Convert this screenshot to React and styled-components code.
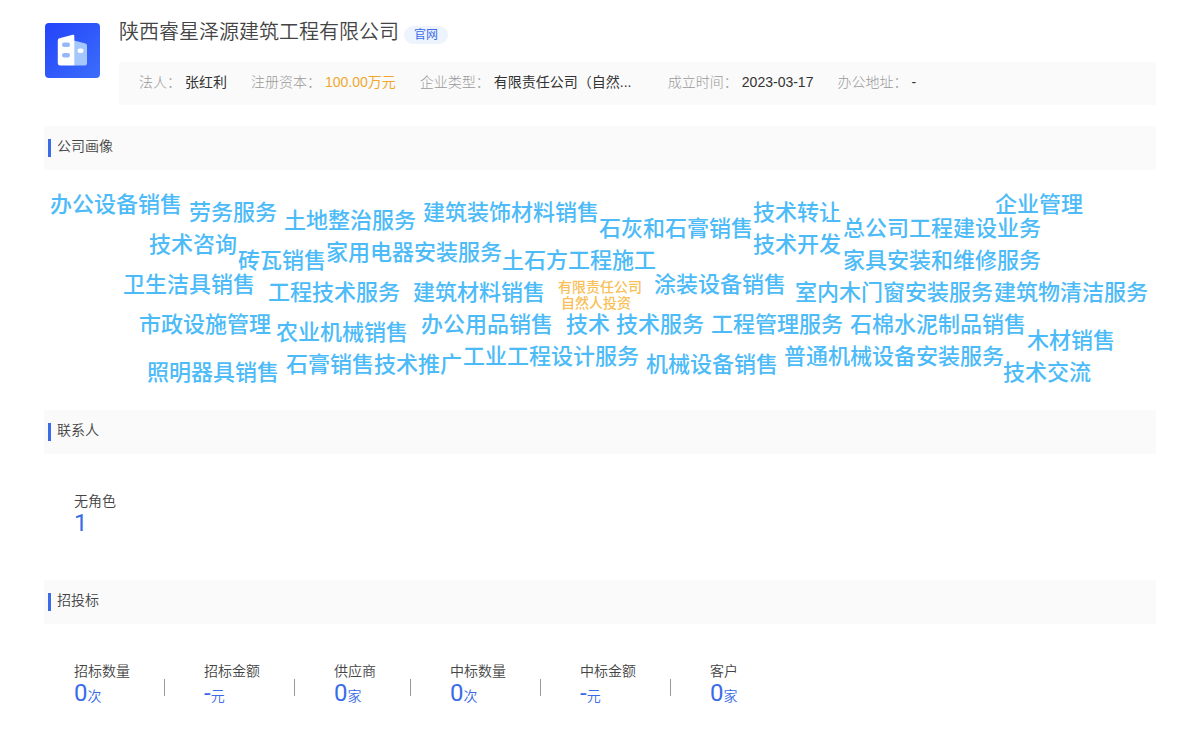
import React from 'react';
import styled, { createGlobalStyle } from 'styled-components';

const GlobalStyle = createGlobalStyle`
  * {
    box-sizing: border-box;
  }

  body {
    margin: 0;
    background-color: #fff;
    color: #444;
    font-family: 'Liberation Sans', 'Noto Sans CJK SC', sans-serif;
    font-size: 14px;
    line-height: 20px;
  }
`;

const Page = styled.main`
  padding: 20px 44px 0;
`;
const Header = styled.header`
  display: flex;
  gap: 19px;
  margin-bottom: 21px;
`;
const Logo = styled.svg`
  flex: none;
  width: 56px;
  height: 56px;
  margin-top: 2px;
`;
const Summary = styled.div`
  flex: 1;
  min-width: 0;
`;
const TitleRow = styled.div`
  display: flex;
  align-items: center;
  gap: 5px;
  margin-bottom: 18px;
`;
const Title = styled.h1`
  margin: 0;
  font-size: 20px;
  font-weight: 350;
  line-height: 24px;
`;
const SiteLink = styled.a`
  margin-top: 6px;
  padding: 0 10px;
  border-radius: 9px;
  background-color: #eef4fe;
  color: #3a6be8;
  font-size: 12px;
  line-height: 18px;
  text-decoration: none;
`;
const Facts = styled.dl`
  display: flex;
  flex-wrap: wrap;
  column-gap: 24px;
  margin: 0;
  padding: 10px 20px 13px;
  background-color: #fafafa;
`;
const Fact = styled.div`
  display: flex;
  gap: 4px;

  dt {
    color: #999;
    font-weight: 300;
  }

  dd {
    margin: 0;
    min-width: ${props => (props.$wide ? '150px' : 'auto')};
    color: ${props => (props.$highlight ? '#efa82e' : '#333')};
  }
`;
const SectionHead = styled.div`
  display: flex;
  height: 44px;
  padding: 10px 4px;
  background-color: #fafafa;

  &:before {
    content: '';
    width: 3px;
    height: 18px;
    margin-top: 3px;
    margin-right: 6px;
    background-color: #3a6be8;
  }

  h2 {
    margin: 0;
    font-size: 14px;
    font-weight: 350;
  }
`;
const Cloud = styled.div`
  position: relative;
  height: 240px;
  overflow: hidden;
`;
const Word = styled.span`
  position: absolute;
  left: calc(50% + ${props => props.$x}px);
  top: ${props => props.$y}px;
  color: ${props => (props.$core ? '#f8c057' : '#4dbbf7')};
  font-size: ${props => (props.$core ? '14px' : '22px')};
  font-weight: 500;
  line-height: ${props => (props.$core ? '16px' : '24px')};
  white-space: nowrap;
`;
const Stats = styled.div`
  display: flex;
  flex-wrap: wrap;
  padding: 37px 30px 45px;
`;
const Stat = styled.div`
  display: flex;
  align-items: flex-end;

  &:not(:last-child):after {
    content: '';
    width: 1px;
    height: 17px;
    margin: 0 39px 12px 34px;
    background-color: #999;
  }
`;
const StatLabel = styled.div`
  font-weight: 350;
`;
const StatValue = styled.div`
  color: #3a6be8;
  font-family: Roboto, 'Noto Sans CJK SC', sans-serif;
  font-size: 24px;
  line-height: 24px;

  small {
    font-size: 14px;
    font-weight: 350;
  }
`;

const facts = [
  { label: '法人', value: '张红利' },
  { label: '注册资本', value: '100.00万元', highlight: true },
  { label: '企业类型', value: '有限责任公司（自然...', wide: true },
  { label: '成立时间', value: '2023-03-17' },
  { label: '办公地址', value: '-' },
];

// x is the distance from the middle of the cloud, y from its top
const words = [
  { text: '有限责任公司', x: -42, y: 109, core: true },
  { text: '自然人投资', x: -39, y: 125, core: true },
  { text: '办公设备销售', x: -550, y: 23 },
  { text: '劳务服务', x: -411, y: 31 },
  { text: '土地整治服务', x: -316, y: 39 },
  { text: '建筑装饰材料销售', x: -177, y: 31 },
  { text: '石灰和石膏销售', x: -1, y: 47 },
  { text: '技术转让', x: 153, y: 31 },
  { text: '总公司工程建设业务', x: 243, y: 47 },
  { text: '企业管理', x: 395, y: 23 },
  { text: '技术咨询', x: -451, y: 63 },
  { text: '砖瓦销售', x: -362, y: 79 },
  { text: '家用电器安装服务', x: -274, y: 71 },
  { text: '土石方工程施工', x: -98, y: 79 },
  { text: '技术开发', x: 153, y: 63 },
  { text: '家具安装和维修服务', x: 243, y: 79 },
  { text: '卫生洁具销售', x: -477, y: 103 },
  { text: '工程技术服务', x: -332, y: 111 },
  { text: '建筑材料销售', x: -187, y: 111 },
  { text: '涂装设备销售', x: 54, y: 103 },
  { text: '室内木门窗安装服务', x: 195, y: 111 },
  { text: '建筑物清洁服务', x: 394, y: 111 },
  { text: '市政设施管理', x: -461, y: 143 },
  { text: '农业机械销售', x: -324, y: 151 },
  { text: '办公用品销售', x: -179, y: 143 },
  { text: '技术', x: -34, y: 143 },
  { text: '技术服务', x: 16, y: 143 },
  { text: '工程管理服务', x: 111, y: 143 },
  { text: '石棉水泥制品销售', x: 250, y: 143 },
  { text: '木材销售', x: 427, y: 159 },
  { text: '照明器具销售', x: -453, y: 191 },
  { text: '石膏销售', x: -314, y: 183 },
  { text: '技术推广', x: -226, y: 183 },
  { text: '工业工程设计服务', x: -137, y: 175 },
  { text: '机械设备销售', x: 46, y: 183 },
  { text: '普通机械设备安装服务', x: 184, y: 175 },
  { text: '技术交流', x: 403, y: 191 },
];

const contacts = [{ label: '无角色', value: '1' }];

const bids = [
  { label: '招标数量', value: '0', unit: '次' },
  { label: '招标金额', value: '-', unit: '元' },
  { label: '供应商', value: '0', unit: '家' },
  { label: '中标数量', value: '0', unit: '次' },
  { label: '中标金额', value: '-', unit: '元' },
  { label: '客户', value: '0', unit: '家' },
];

const CompanyLogo = () => (
  <Logo viewBox="0 0 56 56" aria-hidden="true">
    <defs>
      <linearGradient id="logo-bg" x1="0" y1="0" x2="1" y2="1">
        <stop offset="0" stopColor="#2443fb" />
        <stop offset="1" stopColor="#3b6efb" />
      </linearGradient>
    </defs>
    <rect x="1" y="1" width="55" height="55" rx="4" fill="url(#logo-bg)" />
    <path d="M30 18.5 41.5 21.5Q43 22 43 23.5V41.5Q43 43.5 41 43.5H30Z" fill="#a5c8fc" />
    <path d="M15.5 16.2 28.8 12.8Q30.3 12.5 30.3 14V43.5H16Q13.8 43.5 13.8 41.3V18.4Q13.8 16.6 15.5 16.2Z" fill="#fff" />
    <rect x="18" y="20.5" width="8" height="4.5" rx="2.2" fill="#94b8f8" />
    <rect x="18" y="31" width="8" height="4.5" rx="2.2" fill="#94b8f8" />
    <rect x="33.5" y="26.5" width="6" height="4.5" rx="2.2" fill="#fff" />
  </Logo>
);

const StatList = ({ items }) => (
  <Stats>
    {items.map(item => (
      <Stat key={item.label}>
        <div>
          <StatLabel>{item.label}</StatLabel>
          <StatValue>
            {item.value}
            {item.unit && <small>{item.unit}</small>}
          </StatValue>
        </div>
      </Stat>
    ))}
  </Stats>
);

const Section = ({ title, children }) => (
  <section>
    <SectionHead>
      <h2>{title}</h2>
    </SectionHead>
    {children}
  </section>
);

const App = () => (
  <>
    <GlobalStyle />
    <Page>
      <Header>
        <CompanyLogo />
        <Summary>
          <TitleRow>
            <Title>陕西睿星泽源建筑工程有限公司</Title>
            <SiteLink href="#">官网</SiteLink>
          </TitleRow>
          <Facts>
            {facts.map(fact => (
              <Fact key={fact.label} $highlight={fact.highlight} $wide={fact.wide}>
                <dt>{fact.label}：</dt>
                <dd>{fact.value}</dd>
              </Fact>
            ))}
          </Facts>
        </Summary>
      </Header>

      <Section title="公司画像">
        <Cloud>
          {words.map(word => (
            <Word key={word.text} $x={word.x} $y={word.y} $core={word.core}>
              {word.text}
            </Word>
          ))}
        </Cloud>
      </Section>

      <Section title="联系人">
        <StatList items={contacts} />
      </Section>

      <Section title="招投标">
        <StatList items={bids} />
      </Section>
    </Page>
  </>
);

export default App;
